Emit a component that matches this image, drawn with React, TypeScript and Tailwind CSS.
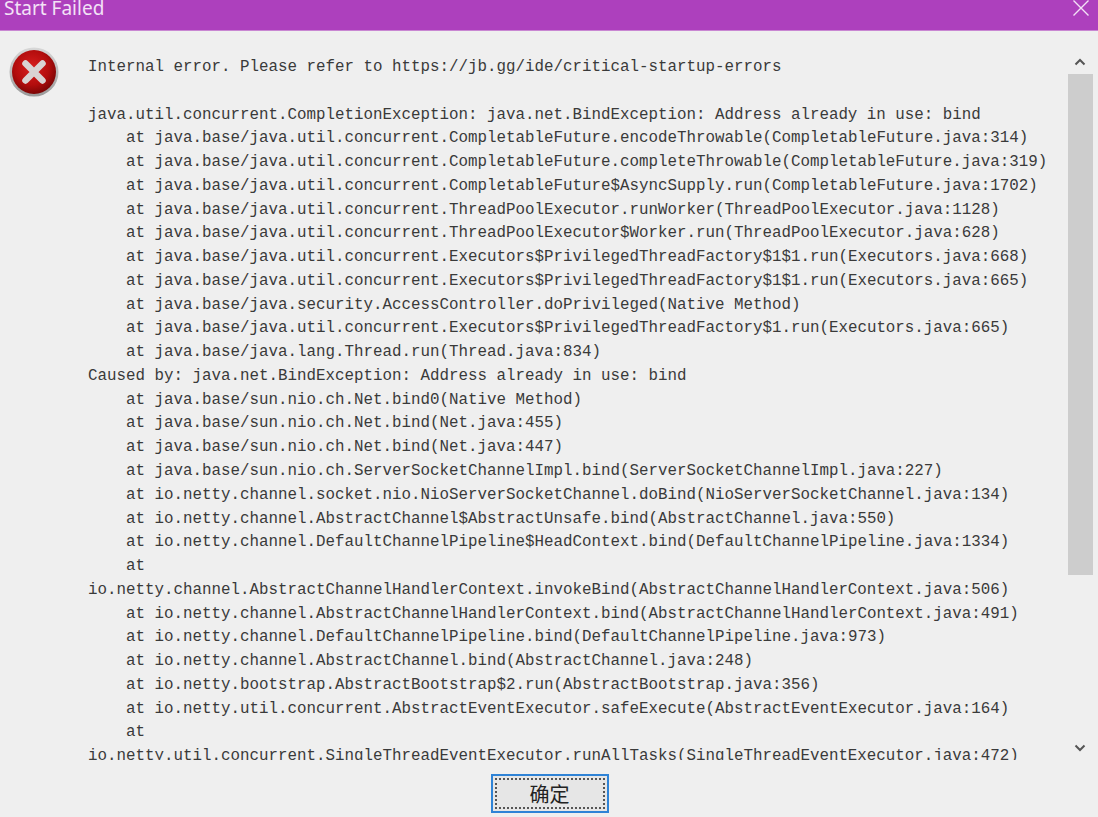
import React from "react";

const lines: [number, string][] = [
  [0, "java.util.concurrent.CompletionException: java.net.BindException: Address already in use: bind"],
  [1, "at java.base/java.util.concurrent.CompletableFuture.encodeThrowable(CompletableFuture.java:314)"],
  [1, "at java.base/java.util.concurrent.CompletableFuture.completeThrowable(CompletableFuture.java:319)"],
  [1, "at java.base/java.util.concurrent.CompletableFuture$AsyncSupply.run(CompletableFuture.java:1702)"],
  [1, "at java.base/java.util.concurrent.ThreadPoolExecutor.runWorker(ThreadPoolExecutor.java:1128)"],
  [1, "at java.base/java.util.concurrent.ThreadPoolExecutor$Worker.run(ThreadPoolExecutor.java:628)"],
  [1, "at java.base/java.util.concurrent.Executors$PrivilegedThreadFactory$1$1.run(Executors.java:668)"],
  [1, "at java.base/java.util.concurrent.Executors$PrivilegedThreadFactory$1$1.run(Executors.java:665)"],
  [1, "at java.base/java.security.AccessController.doPrivileged(Native Method)"],
  [1, "at java.base/java.util.concurrent.Executors$PrivilegedThreadFactory$1.run(Executors.java:665)"],
  [1, "at java.base/java.lang.Thread.run(Thread.java:834)"],
  [0, "Caused by: java.net.BindException: Address already in use: bind"],
  [1, "at java.base/sun.nio.ch.Net.bind0(Native Method)"],
  [1, "at java.base/sun.nio.ch.Net.bind(Net.java:455)"],
  [1, "at java.base/sun.nio.ch.Net.bind(Net.java:447)"],
  [1, "at java.base/sun.nio.ch.ServerSocketChannelImpl.bind(ServerSocketChannelImpl.java:227)"],
  [1, "at io.netty.channel.socket.nio.NioServerSocketChannel.doBind(NioServerSocketChannel.java:134)"],
  [1, "at io.netty.channel.AbstractChannel$AbstractUnsafe.bind(AbstractChannel.java:550)"],
  [1, "at io.netty.channel.DefaultChannelPipeline$HeadContext.bind(DefaultChannelPipeline.java:1334)"],
  [1, "at"],
  [0, "io.netty.channel.AbstractChannelHandlerContext.invokeBind(AbstractChannelHandlerContext.java:506)"],
  [1, "at io.netty.channel.AbstractChannelHandlerContext.bind(AbstractChannelHandlerContext.java:491)"],
  [1, "at io.netty.channel.DefaultChannelPipeline.bind(DefaultChannelPipeline.java:973)"],
  [1, "at io.netty.channel.AbstractChannel.bind(AbstractChannel.java:248)"],
  [1, "at io.netty.bootstrap.AbstractBootstrap$2.run(AbstractBootstrap.java:356)"],
  [1, "at io.netty.util.concurrent.AbstractEventExecutor.safeExecute(AbstractEventExecutor.java:164)"],
  [1, "at"],
  [0, "io.netty.util.concurrent.SingleThreadEventExecutor.runAllTasks(SingleThreadEventExecutor.java:472)"],
];

function ErrorIcon() {
  return (
    <svg width="50" height="50" viewBox="0 0 50 50" className="shrink-0">
      <defs>
        <radialGradient id="red" cx="45%" cy="40%" r="60%">
          <stop offset="0%" stopColor="#d81e1e" />
          <stop offset="65%" stopColor="#b30d0d" />
          <stop offset="100%" stopColor="#7c0606" />
        </radialGradient>
        <linearGradient id="ring" x1="0" y1="0" x2="0" y2="1">
          <stop offset="0%" stopColor="#d8d8d8" />
          <stop offset="100%" stopColor="#9a9a9a" />
        </linearGradient>
      </defs>
      <circle cx="25" cy="25" r="24.5" fill="url(#ring)" />
      <circle cx="25" cy="25" r="22" fill="url(#red)" />
      <path d="M16.5 16.5 L33.5 33.5 M33.5 16.5 L16.5 33.5" stroke="#d9d3d3" strokeWidth="6.5" strokeLinecap="round" />
    </svg>
  );
}

export default function App() {
  return (
    <div className="w-[1098px] h-[817px] overflow-hidden flex flex-col bg-[#efefef] font-['Liberation_Mono',monospace] text-[#3a3a3a]">
      <div className="h-[31px] shrink-0 flex justify-between items-start bg-[#ad40bd] border-b border-[#c987d2] overflow-hidden text-white">
        <span className="pl-[4px] -mt-[4px] text-[19px] leading-[24px] font-['Noto_Sans',sans-serif] text-[#f3e2f6]">Start Failed</span>
        <svg width="18" height="18" viewBox="0 0 18 18" className="mr-[8px] -mt-[1px]">
          <path d="M1.5 1.5 L16.5 16.5 M16.5 1.5 L1.5 16.5" stroke="#f3e2f6" strokeWidth="1.4" />
        </svg>
      </div>
      <div className="h-[733px] shrink-0 flex">
        <div className="pl-[9px] pt-[16px] w-[88px] shrink-0">
          <ErrorIcon />
        </div>
        <div className="w-[979px] h-[729px] overflow-hidden pt-[25px] text-[15.84px] leading-[23.76px] tracking-normal">
          <div className="whitespace-pre">Internal error. Please refer to https://jb.gg/ide/critical-startup-errors</div>
          <div className="h-[23.76px]" />
          {lines.map(([indent, text], i) => (
            <div key={i} className={indent ? "whitespace-pre pl-[38px]" : "whitespace-pre"}>
              {text}
            </div>
          ))}
        </div>
        <div className="w-[26px] h-[710px] mt-[18px] shrink-0 flex flex-col items-center">
          <svg width="12" height="8" viewBox="0 0 12 8" className="mt-[9px] shrink-0">
            <path d="M1.5 6.5 L6 2 L10.5 6.5" fill="none" stroke="#555555" strokeWidth="2" />
          </svg>
          <div className="w-[25px] self-end h-[501px] mt-[8px] bg-[#cdcdcd]" />
          <div className="flex-1" />
          <svg width="12" height="8" viewBox="0 0 12 8" className="mb-[7px] shrink-0">
            <path d="M1.5 1.5 L6 6 L10.5 1.5" fill="none" stroke="#555555" strokeWidth="2" />
          </svg>
        </div>
        <div className="w-[5px]" />
      </div>
      <div className="flex justify-center pt-[10px] pl-[1px]">
        <button className="w-[118px] h-[39px] border-2 border-[#2f83d6] bg-[#e6e6e6] p-[2px]">
          <span className="flex items-center justify-center w-full h-full border-2 border-dotted border-[#555555] text-[20px] text-[#222222] font-['Noto_Sans_CJK_SC',sans-serif]">
            确定
          </span>
        </button>
      </div>
    </div>
  );
}
